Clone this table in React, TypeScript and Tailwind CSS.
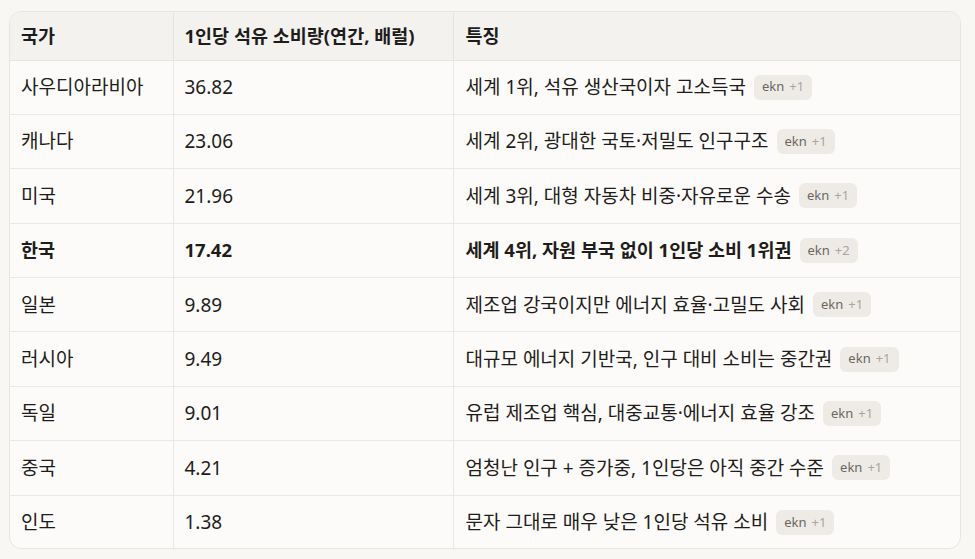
import React from "react";

type Row = { country: string; value: string; note: string; n: string; bold?: boolean };

const rows: Row[] = [
  { country: "사우디아라비아", value: "36.82", note: "세계 1위, 석유 생산국이자 고소득국", n: "+1" },
  { country: "캐나다", value: "23.06", note: "세계 2위, 광대한 국토·저밀도 인구구조", n: "+1" },
  { country: "미국", value: "21.96", note: "세계 3위, 대형 자동차 비중·자유로운 수송", n: "+1" },
  { country: "한국", value: "17.42", note: "세계 4위, 자원 부국 없이 1인당 소비 1위권", n: "+2", bold: true },
  { country: "일본", value: "9.89", note: "제조업 강국이지만 에너지 효율·고밀도 사회", n: "+1" },
  { country: "러시아", value: "9.49", note: "대규모 에너지 기반국, 인구 대비 소비는 중간권", n: "+1" },
  { country: "독일", value: "9.01", note: "유럽 제조업 핵심, 대중교통·에너지 효율 강조", n: "+1" },
  { country: "중국", value: "4.21", note: "엄청난 인구 + 증가중, 1인당은 아직 중간 수준", n: "+1" },
  { country: "인도", value: "1.38", note: "문자 그대로 매우 낮은 1인당 석유 소비", n: "+1" },
];

export default function App() {
  return (
    <div
      className="w-[975px] h-[559px] bg-[#f8f7f4] pt-[11px] pl-[9px] overflow-hidden"
      style={{ fontFamily: '"Noto Sans", "Noto Sans CJK KR", sans-serif' }}
    >
      <div className="w-[952px] h-[538px] rounded-[12px] border border-[#e8e5e0] overflow-hidden bg-[#fcfbf9]">
        <table className="w-full border-collapse text-[19px] text-[#1f1d1b] table-fixed">
          <colgroup>
            <col className="w-[163px]" />
            <col className="w-[280px]" />
            <col />
          </colgroup>
          <thead>
            <tr className="h-[48px] bg-[#f4f2ef] text-[18.5px]">
              <th className="text-left font-bold px-[11px] border-b border-[#e8e5e0]">국가</th>
              <th className="text-left font-bold px-[11px] border-b border-l border-[#e8e5e0]">1인당 석유 소비량(연간, 배럴)</th>
              <th className="text-left font-bold px-[12px] border-b border-l border-[#e8e5e0]">특징</th>
            </tr>
          </thead>
          <tbody>
            {rows.map((r, i) => (
              <tr key={i} className={`h-[54.4px] ${r.bold ? "font-bold text-[18.5px]" : ""}`}>
                <td className={`px-[11px] ${i < rows.length - 1 ? "border-b" : ""} border-[#ebe8e4]`}>{r.country}</td>
                <td className={`px-[11px] border-l ${i < rows.length - 1 ? "border-b" : ""} border-[#ebe8e4]`}>{r.value}</td>
                <td className={`px-[12px] border-l ${i < rows.length - 1 ? "border-b" : ""} border-[#ebe8e4]`}>
                  <div className="flex items-center gap-[8px] whitespace-nowrap">
                    <span>{r.note}</span>
                    <span className="inline-flex items-center h-[25px] px-[8px] rounded-[6px] bg-[#eeebe7] text-[13px] font-normal gap-[5px]">
                      <span className="text-[#6b6661]">ekn</span>
                      <span className="text-[#a9a49e]">{r.n}</span>
                    </span>
                  </div>
                </td>
              </tr>
            ))}
          </tbody>
        </table>
      </div>
    </div>
  );
}
